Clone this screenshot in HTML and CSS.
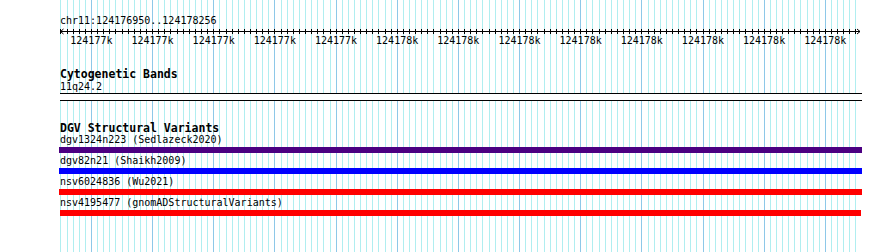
FILE: index.html
```html
<!DOCTYPE html>
<html>
<head>
    <title>chr11:124176950..124178256</title>
    <link rel="stylesheet" href="styles.css">
</head>
<body>
    <div class="view">
        <div class="ruler">
            <div class="ruler-label">chr11:124176950..124178256</div>
            <svg class="ruler-axis" width="802" height="7" viewBox="0 0 802 7">
                <line x1="0" y1="3.5" x2="800" y2="3.5" stroke="#000" stroke-width="1"/>
                <polyline points="3.5,1 0.5,3.5 3.5,6" fill="none" stroke="#000" stroke-width="1"/>
                <polyline points="797,1 800,3.5 797,6" fill="none" stroke="#000" stroke-width="1"/>
            </svg>
            <div class="ruler-ticks">
                <span>124177k</span>
                <span>124177k</span>
                <span>124177k</span>
                <span>124177k</span>
                <span>124177k</span>
                <span>124178k</span>
                <span>124178k</span>
                <span>124178k</span>
                <span>124178k</span>
                <span>124178k</span>
                <span>124178k</span>
                <span>124178k</span>
                <span>124178k</span>
            </div>
        </div>

        <div class="track track-bands">
            <div class="track-title">Cytogenetic Bands</div>
            <div class="feature-label">11q24.2</div>
            <div class="band"></div>
        </div>

        <div class="track track-dgv">
            <div class="track-title">DGV Structural Variants</div>
            <div class="feature">
                <div class="feature-label">dgv1324n223 (Sedlazeck2020)</div>
                <div class="bar bar-indigo"></div>
            </div>
            <div class="feature">
                <div class="feature-label">dgv82n21 (Shaikh2009)</div>
                <div class="bar bar-blue"></div>
            </div>
            <div class="feature">
                <div class="feature-label">nsv6024836 (Wu2021)</div>
                <div class="bar bar-red"></div>
            </div>
            <div class="feature">
                <div class="feature-label">nsv4195477 (gnomADStructuralVariants)</div>
                <div class="bar bar-red bar-short"></div>
            </div>
        </div>
    </div>
</body>
</html>
```

FILE: styles.css
```css
body {
    margin: 0;
    background-color: #fff;
    font-family: 'DejaVu Sans Mono', 'Liberation Mono', monospace;
    font-size: 10px;
    line-height: 12px;
    color: #000;
}
.view {
    margin-left: 60px;
    width: 802px;
    height: 252px;
    padding-top: 15px;
    box-sizing: border-box;
    /* grid: major line every 61.16px, minor every 6.116px */
    background-image:
        repeating-linear-gradient(to right, transparent 0 30.98px, #8ec8e8 30.98px 31.98px, transparent 31.98px 61.16px),
        repeating-linear-gradient(to right, transparent 0 0.4px, #b0eef0 0.4px 1.4px, transparent 1.4px 6.116px);
}
.ruler-axis {
    display: block;
    margin-top: 1px;
    background-image: repeating-linear-gradient(to right, transparent 0 0.4px, #000 0.4px 1.4px, transparent 1.4px 6.116px);
    background-size: 797px 5px;
    background-position: 0 1px;
    background-repeat: no-repeat;
}
.ruler-ticks {
    display: flex;
    padding-left: 0.8px;
}
.ruler-ticks span {
    flex: 0 0 61.16px;
    text-align: center;
}
.track-bands {
    margin-top: 21px;
}
.track-title {
    font-size: 11.5px;
    font-weight: bold;
}
.track-bands .track-title {
    line-height: 13px;
}
.band {
    height: 6px;
    background-color: #fff;
    border-top: 1px solid #000;
    border-bottom: 1px solid #000;
}
.track-dgv {
    margin-top: 21px;
}
.feature {
    padding-bottom: 2px;
}
.bar {
    height: 6px;
    margin-top: 1px;
    margin-left: -1px;
    width: 803px;
}
.bar-short {
    margin-left: 0;
    width: 801px;
}
.bar-indigo {
    background-color: #4b0082;
}
.bar-blue {
    background-color: #0000ff;
}
.bar-red {
    background-color: #ff0000;
}
```
